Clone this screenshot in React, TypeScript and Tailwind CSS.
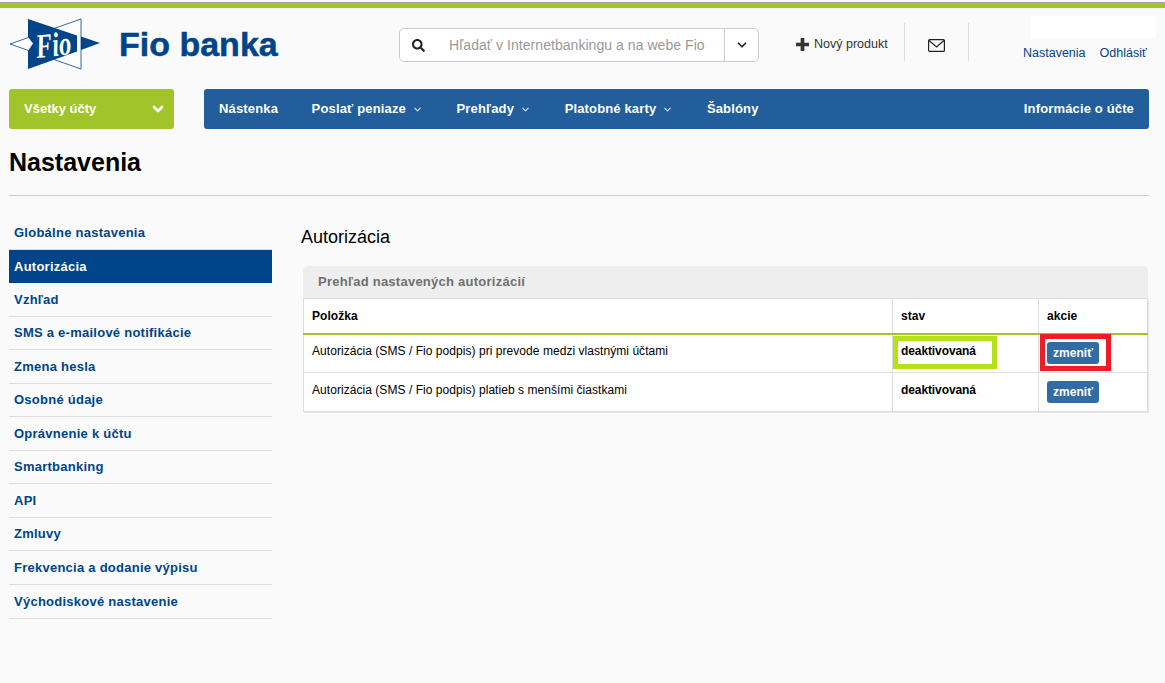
import React from "react";
import { ChevronDown } from "lucide-react";
import { FaSearch } from "react-icons/fa";

const menu = [
  "Globálne nastavenia",
  "Autorizácia",
  "Vzhľad",
  "SMS a e-mailové notifikácie",
  "Zmena hesla",
  "Osobné údaje",
  "Oprávnenie k účtu",
  "Smartbanking",
  "API",
  "Zmluvy",
  "Frekvencia a dodanie výpisu",
  "Východiskové nastavenie",
];

const nav = [
  { label: "Nástenka", caret: false },
  { label: "Poslať peniaze", caret: true },
  { label: "Prehľady", caret: true },
  { label: "Platobné karty", caret: true },
  { label: "Šablóny", caret: false },
];

// Fio flag mark
function Logo() {
  return (
    <svg viewBox="0 0 92 52" className="w-[92px] h-[52px] shrink-0">
      <polygon points="1,26 72,1 72,51" fill="#fff" stroke="#004489" strokeWidth="0.8" />
      <polygon points="19,1 68,17.5 68,33.5 19,51" fill="#004489" />
      <polygon points="72,18.5 91,25 72,32" fill="#004489" />
      <polygon points="19,19 24,25.5 19,33" fill="#fff" />
      <text
        transform="translate(28 40) rotate(-6) scale(0.72 1)"
        fontFamily="'Liberation Serif', serif"
        fontStyle="italic"
        fontWeight="700"
        fontSize="34"
        fill="#fff"
      >
        Fio
      </text>
    </svg>
  );
}

function ChangeButton() {
  return (
    <button className="bg-[#336ba5] text-white font-bold text-[12px] leading-none rounded-[3px] w-[52px] h-[22px] flex items-center justify-center">
      zmeniť
    </button>
  );
}

export default function App() {
  return (
    <div className="w-[1165px] h-[683px] overflow-hidden bg-[#fafafa] font-['Liberation_Sans',Arial,sans-serif] text-black">
      {/* Top strip */}
      <div className="h-[8px] pt-[2px]">
        <div className="h-[6px] border-t border-[#a3a3a3] bg-[#a0c42a]" />
      </div>

      {/* Header */}
      <header className="h-[81px] pl-[9px] flex items-start">
        <div className="w-[390px] pt-[10px] flex items-center gap-[18px]">
          <Logo />
          <span className="text-[34px] leading-none font-bold text-[#004489] [-webkit-text-stroke:0.5px_#004489] whitespace-nowrap">Fio banka</span>
        </div>

        <div className="mt-[20px] h-[34px] w-[360px] flex border border-[#cccccc] rounded-[5px] bg-white">
          <div className="w-[49px] pl-[12px] flex items-center">
            <FaSearch size={13} className="text-[#222]" />
          </div>
          <div className="flex-1 flex items-center text-[14px] tracking-[0.05px] text-[#999] whitespace-nowrap">Hľadať v Internetbankingu a na webe Fio</div>
          <div className="w-[34px] border-l border-[#cccccc] flex items-center justify-center">
            <ChevronDown size={14} strokeWidth={3} className="text-[#222]" />
          </div>
        </div>

        <div className="ml-[37px] mt-[15px] h-[38px] w-[109px] flex items-center pt-[5px] border-r border-[#dddddd]">
          <svg viewBox="0 0 14 14" className="w-[13px] h-[13px] mr-[5px]">
            <path d="M5 0h4v5h5v4H9v5H5V9H0V5h5z" fill="#333" />
          </svg>
          <span className="text-[12.5px] text-[#333] whitespace-nowrap">Nový produkt</span>
        </div>
        <div className="mt-[15px] h-[38px] w-[64px] pt-[6px] flex items-center justify-center border-r border-[#dddddd]">
          <svg viewBox="0 0 17 13" className="w-[17px] h-[13px]" fill="none" stroke="#222" strokeWidth="1.2">
            <rect x="0.6" y="0.6" width="15.8" height="11.8" rx="1" />
            <path d="M1 1.5l7.5 6.5L16 1.5" />
          </svg>
        </div>
        <div className="ml-[54px] mt-[8px] w-[133px] flex flex-col items-end">
          <div className="h-[23px] w-[125px] bg-white" />
          <div className="mt-[5px] w-[133px] flex gap-[14px] text-[12.5px] text-[#004489] whitespace-nowrap">
            <span>Nastavenia</span>
            <span>Odhlásiť</span>
          </div>
        </div>
      </header>

      {/* Nav */}
      <div className="flex pl-[9px]">
        <div className="w-[165px] h-[40px] rounded-[3px] bg-[#a0c42a] flex items-center justify-between pl-[15px] pr-[8px] text-white font-bold text-[13px]">
          Všetky účty
          <ChevronDown size={16} strokeWidth={4} />
        </div>
        <nav className="ml-[30px] w-[945px] h-[40px] rounded-[3px] bg-[#215e9b] flex items-center px-[15px] text-white font-bold text-[13px] tracking-[0.15px]">
          <div className="flex items-center gap-[33.6px]">
            {nav.map((n) => (
              <span key={n.label} className="flex items-center gap-[6px] whitespace-nowrap">
                {n.label}
                {n.caret && <ChevronDown size={11} strokeWidth={2.5} className="text-[#d5e2ef]" />}
              </span>
            ))}
          </div>
          <span className="ml-auto whitespace-nowrap">Informácie o účte</span>
        </nav>
      </div>

      {/* Title */}
      <div className="ml-[9px] w-[1140px] h-[67px] border-b border-[#cccccc] pt-[19px]">
        <h1 className="text-[25px] leading-[28px] font-bold">Nastavenia</h1>
      </div>

      <div className="flex pl-[9px] pt-[20px]">
        {/* Sidebar */}
        <aside className="w-[263px] shrink-0 text-[13px] font-bold tracking-[0.25px] text-[#004489]">
          {menu.map((m) => {
            const active = m === "Autorizácia";
            return (
              <div
                key={m}
                className={
                  active
                    ? "h-[33.55px] flex items-center pl-[5px] bg-[#004489] text-white"
                    : "h-[33.55px] flex items-center pl-[5px] border-b border-[#dddddd]"
                }
              >
                {m}
              </div>
            );
          })}
        </aside>

        {/* Main */}
        <main className="ml-[29px] w-[847px]">
          <h2 className="text-[18px] leading-[22px] mt-[10px]">Autorizácia</h2>
          <section className="mt-[18px] ml-[2px] rounded-t-[5px] bg-[#eeeeee]">
            <div className="h-[32px] pl-[15px] flex items-center text-[13px] font-bold tracking-[0.25px] text-[#707070]">Prehľad nastavených autorizácií</div>
            <table className="w-[844px] table-fixed border-collapse bg-white text-[12px] tracking-[0.05px] shadow-[1px_1px_0_#e5e5e5]">
              <colgroup>
                <col className="w-[589px]" />
                <col className="w-[146px]" />
                <col className="w-[109px]" />
              </colgroup>
              <thead>
                <tr className="h-[35px] border-b-2 border-[#a0c42a]">
                  <th className="text-left font-bold pl-[8px] border border-b-0 border-[#dddddd]">Položka</th>
                  <th className="text-left font-bold pl-[8px] border border-b-0 border-[#dddddd]">stav</th>
                  <th className="text-left font-bold pl-[8px] border border-b-0 border-[#dddddd]">akcie</th>
                </tr>
              </thead>
              <tbody>
                <tr className="h-[39px]">
                  <td className="pl-[8px] pb-[5px] border border-t-0 border-[#dddddd]">Autorizácia (SMS / Fio podpis) pri prevode medzi vlastnými účtami</td>
                  <td className="relative pl-[8px] pb-[5px] font-bold tracking-[-0.1px] border border-t-0 border-[#dddddd]">
                    deaktivovaná
                    <div className="absolute left-0 top-[1px] w-[104px] h-[33px] border-[5px] border-[#b5e216]" />
                  </td>
                  <td className="relative pl-[8px] border border-t-0 border-[#dddddd]">
                    <ChangeButton />
                    <div className="absolute left-[1px] -top-px w-[71px] h-[37px] border-[5px] border-[#ee1c25]" />
                  </td>
                </tr>
                <tr className="h-[39px]">
                  <td className="pl-[8px] pb-[5px] border border-[#dddddd]">Autorizácia (SMS / Fio podpis) platieb s menšími čiastkami</td>
                  <td className="pl-[8px] pb-[5px] font-bold tracking-[-0.1px] border border-[#dddddd]">deaktivovaná</td>
                  <td className="pl-[8px] border border-[#dddddd]">
                    <ChangeButton />
                  </td>
                </tr>
              </tbody>
            </table>
          </section>
        </main>
      </div>
    </div>
  );
}
